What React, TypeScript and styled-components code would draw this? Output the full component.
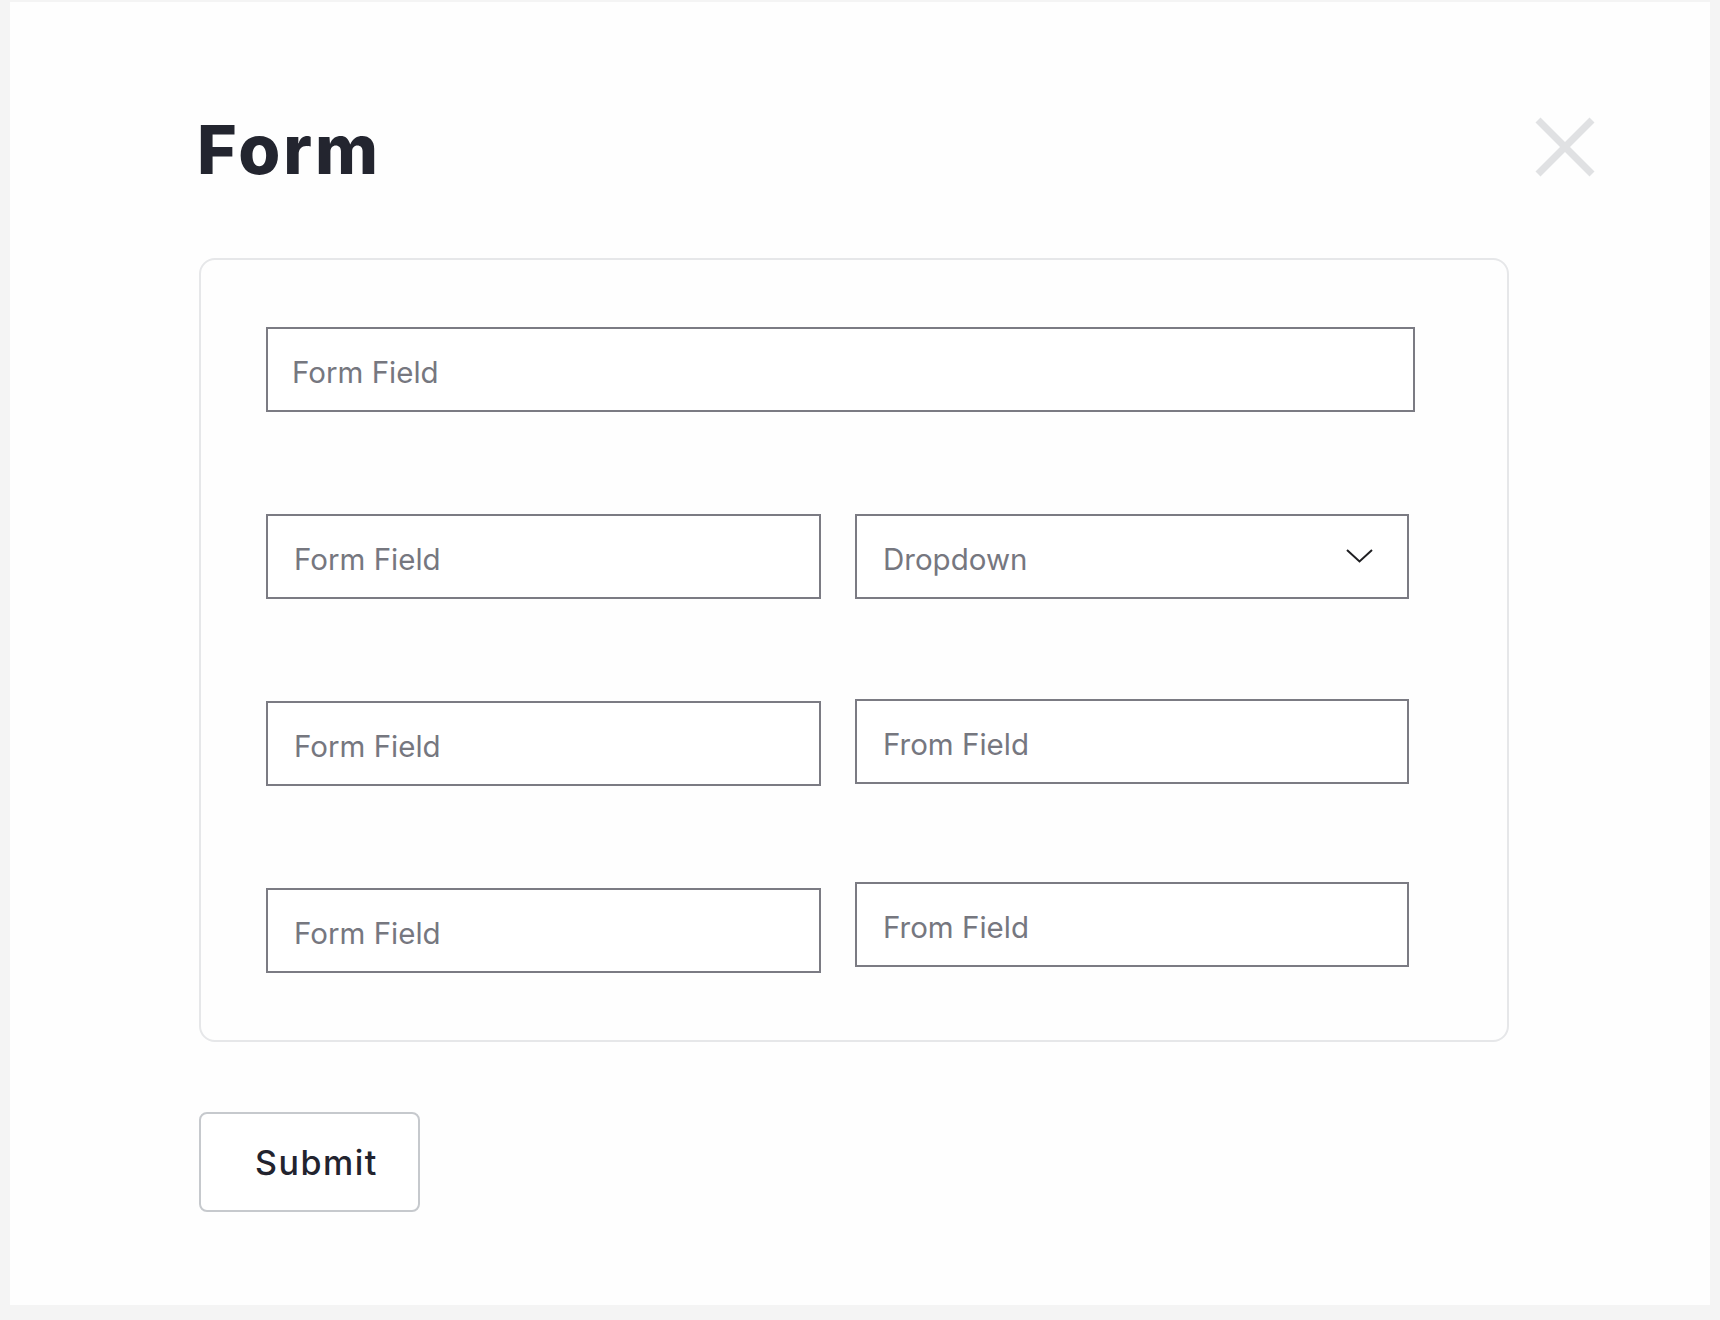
import React from "react";
import styled, { createGlobalStyle } from "styled-components";

const GlobalStyle = createGlobalStyle`
  html, body {
    margin: 0;
    padding: 0;
    background: #f4f4f4;
  }
  * { box-sizing: border-box; }
  #root {
    padding: 2px 10px 15px 10px;
  }
`;

const Panel = styled.main`
  width: 1700px;
  height: 1303px;
  background: #fefefe;
  padding: 113px 115px 0 189px;
  font-family: Inter, "Noto Sans", "Liberation Sans", sans-serif;
`;

const Header = styled.header`
  display: flex;
  align-items: center;
  justify-content: space-between;
  height: 67px;
`;

const Title = styled.h1`
  margin: 0 0 0 -2px;
  font-size: 68px;
  line-height: 1;
  font-weight: 800;
  color: #23252f;
  letter-spacing: 3px;
`;

const CloseButton = styled.button`
  width: 60px;
  height: 60px;
  padding: 0;
  border: none;
  background: transparent;
  cursor: pointer;
  display: flex;
  margin-top: -4px;
`;

const Card = styled.form`
  margin-top: 76px;
  width: 1310px;
  border: 2px solid #e6e7e9;
  border-radius: 16px;
  padding: 67px 0 67px 65px;
  display: flex;
  flex-direction: column;
  gap: 102px;
`;

const Row = styled.div`
  display: grid;
  grid-template-columns: 555px 554px;
  column-gap: 34px;
  align-items: start;
`;

const Field = styled.input<{ $wide?: boolean; $shift?: number; $indent?: number }>`
  display: block;
  width: ${(p) => (p.$wide ? "1149px" : "100%")};
  height: 85px;
  margin-top: ${(p) => -(p.$shift ?? 0)}px;
  border: 2px solid #7b7b83;
  border-radius: 0;
  background: #fff;
  padding: 4px 20px 0 ${(p) => p.$indent ?? 26}px;
  font-family: Inter, "Noto Sans", "Liberation Sans", sans-serif;
  font-size: 29.5px;
  color: #76777f;
  outline: none;
  &::placeholder {
    color: #76777f;
    opacity: 1;
  }
`;

const Select = styled.div`
  display: flex;
  align-items: center;
  justify-content: space-between;
  height: 85px;
  border: 2px solid #7b7b83;
  background: #fff;
  padding: 4px 34px 0 26px;
  font-size: 29.5px;
  color: #76777f;
  cursor: pointer;
`;

const Chevron = styled.svg`
  width: 27px;
  height: 14px;
  margin-top: -6px;
  flex: none;
`;

const SubmitButton = styled.button`
  margin-top: 70px;
  width: 221px;
  height: 100px;
  border: 2px solid #c6c9cd;
  border-radius: 8px;
  background: #fff;
  padding: 0 0 0 54px;
  text-align: left;
  font-family: Inter, "Noto Sans", "Liberation Sans", sans-serif;
  font-size: 34px;
  font-weight: 500;
  letter-spacing: 1.5px;
  color: #22232e;
  cursor: pointer;
`;

export default function App() {
  return (
    <>
      <GlobalStyle />
      <Panel>
        <Header>
          <Title>Form</Title>
          <CloseButton aria-label="Close">
            <svg width="60" height="60" viewBox="0 0 60 60">
              <line x1="3" y1="3" x2="57" y2="57" stroke="#e0e1e3" strokeWidth="7" />
              <line x1="57" y1="3" x2="3" y2="57" stroke="#e0e1e3" strokeWidth="7" />
            </svg>
          </CloseButton>
        </Header>
        <Card onSubmit={(e) => e.preventDefault()}>
          <Field $wide $indent={24} placeholder="Form Field" />
          <Row>
            <Field placeholder="Form Field" />
            <Select>
              <span>Dropdown</span>
              <Chevron viewBox="0 0 27 14">
                <polyline points="1,1 13.5,12.5 26,1" fill="none" stroke="#1f1f22" strokeWidth="2" />
              </Chevron>
            </Select>
          </Row>
          <Row>
            <Field placeholder="Form Field" />
            <Field $shift={2} placeholder="From Field" />
          </Row>
          <Row>
            <Field placeholder="Form Field" />
            <Field $shift={6} placeholder="From Field" />
          </Row>
        </Card>
        <SubmitButton type="button">Submit</SubmitButton>
      </Panel>
    </>
  );
}
